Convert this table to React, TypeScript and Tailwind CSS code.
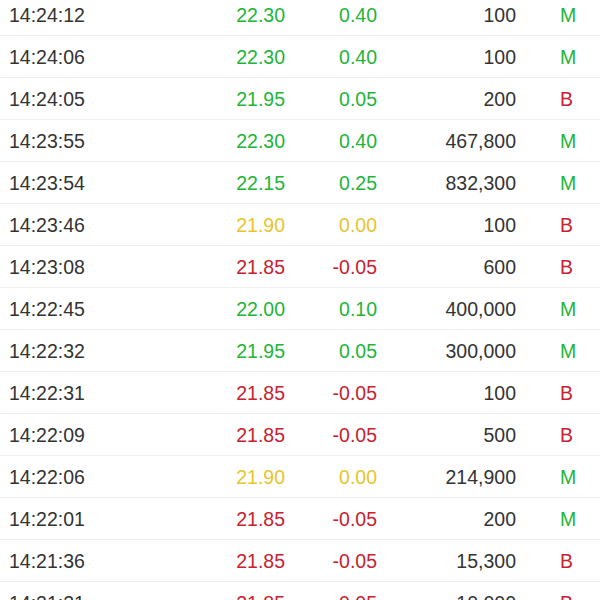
import React from "react";

type Row = [string, string, string, string, string, "g" | "r" | "y", "g" | "r"];

const rows: Row[] = [
  ["14:24:12", "22.30", "0.40", "100", "M", "g", "g"],
  ["14:24:06", "22.30", "0.40", "100", "M", "g", "g"],
  ["14:24:05", "21.95", "0.05", "200", "B", "g", "r"],
  ["14:23:55", "22.30", "0.40", "467,800", "M", "g", "g"],
  ["14:23:54", "22.15", "0.25", "832,300", "M", "g", "g"],
  ["14:23:46", "21.90", "0.00", "100", "B", "y", "r"],
  ["14:23:08", "21.85", "-0.05", "600", "B", "r", "r"],
  ["14:22:45", "22.00", "0.10", "400,000", "M", "g", "g"],
  ["14:22:32", "21.95", "0.05", "300,000", "M", "g", "g"],
  ["14:22:31", "21.85", "-0.05", "100", "B", "r", "r"],
  ["14:22:09", "21.85", "-0.05", "500", "B", "r", "r"],
  ["14:22:06", "21.90", "0.00", "214,900", "M", "y", "g"],
  ["14:22:01", "21.85", "-0.05", "200", "M", "r", "g"],
  ["14:21:36", "21.85", "-0.05", "15,300", "B", "r", "r"],
  ["14:21:21", "21.85", "-0.05", "10,000", "B", "r", "r"],
];

const colorClass = {
  g: "text-[#22b53a]",
  r: "text-[#c8212f]",
  y: "text-[#e8c42e]",
};

export default function App() {
  return (
    <div
      className="w-[600px] h-[600px] overflow-hidden bg-white"
      style={{ fontFamily: '"Liberation Sans", Arial, sans-serif' }}
    >
      <div className="-mt-[6px] flex flex-col">
        {rows.map((r, i) => (
          <div
            key={i}
            className="h-[42px] pt-[2px] flex items-center border-b border-[#f0f0f0] text-[19.5px] leading-none"
          >
            <div className="pl-[9px] w-[185px] text-[#333333]">{r[0]}</div>
            <div className={`w-[100px] text-right ${colorClass[r[5]]}`}>{r[1]}</div>
            <div className={`w-[92px] text-right ${colorClass[r[5]]}`}>{r[2]}</div>
            <div className="w-[139px] text-right text-[#333333]">{r[3]}</div>
            <div className={`pl-[44px] ${colorClass[r[6]]}`}>{r[4]}</div>
          </div>
        ))}
      </div>
    </div>
  );
}
